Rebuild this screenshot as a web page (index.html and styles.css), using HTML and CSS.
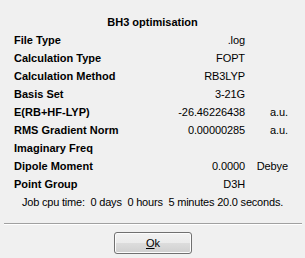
FILE: index.html
```html
<!DOCTYPE html>
<html>
	<head>
		<meta charset="UTF-8">
		<title>BH3 optimisation</title>
		<link rel="stylesheet" href="styles.css">
	</head>
	<body>
		<div id="dialog">
			<div class="title">BH3 optimisation</div>
			<div id="props">
				<div class="lbl">File Type</div><div class="val">.log</div><div class="unit"></div>
				<div class="lbl">Calculation Type</div><div class="val">FOPT</div><div class="unit"></div>
				<div class="lbl">Calculation Method</div><div class="val">RB3LYP</div><div class="unit"></div>
				<div class="lbl">Basis Set</div><div class="val">3-21G</div><div class="unit"></div>
				<div class="lbl">E(RB+HF-LYP)</div><div class="val">-26.46226438</div><div class="unit">a.u.</div>
				<div class="lbl">RMS Gradient Norm</div><div class="val">0.00000285</div><div class="unit">a.u.</div>
				<div class="lbl">Imaginary Freq</div><div class="val"></div><div class="unit"></div>
				<div class="lbl">Dipole Moment</div><div class="val">0.0000</div><div class="unit">Debye</div>
				<div class="lbl">Point Group</div><div class="val">D3H</div><div class="unit"></div>
			</div>
			<div class="cpu">Job cpu time:  0 days  0 hours  5 minutes 20.0 seconds.</div>
			<div class="sep"></div>
			<div class="buttons">
				<button class="btn"><u>O</u>k</button>
			</div>
		</div>
	</body>
</html>
```

FILE: styles.css
```css
* {
	margin: 0;
	padding: 0;
	box-sizing: border-box;
}

body {
	background: #f0f0f0;
	font-family: "Liberation Sans", Arial, sans-serif;
	font-size: 11px;
	color: #000;
}

#dialog {
	width: 305px;
	height: 258px;
	padding-top: 13px;
}

.title {
	font-weight: bold;
	text-align: center;
	line-height: 18px;
}

#props {
	display: grid;
	grid-template-columns: 1fr 100px 43px;
	padding: 0 17px 0 14px;
	line-height: 18px;
}

.lbl {
	font-weight: bold;
	white-space: nowrap;
}

.val,
.unit {
	text-align: right;
	white-space: nowrap;
	letter-spacing: -0.1px;
}

.cpu {
	text-align: center;
	white-space: pre;
	line-height: 18px;
	letter-spacing: -0.2px;
}

.sep {
	margin: 12px 3px 0 4px;
	border-top: 1px solid #a0a0a0;
	border-bottom: 1px solid #fff;
}

.buttons {
	display: flex;
	justify-content: center;
	padding-top: 7px;
}

.btn {
	width: 78px;
	height: 22px;
	margin-left: 1px;
	border: 1px solid #707070;
	border-radius: 3px;
	box-shadow: inset 0 0 0 1px #fcfcfc;
	background: linear-gradient(#f2f2f2 0, #ebebeb 50%, #dddddd 50%, #cfcfcf 100%);
	font-family: "Liberation Sans", Arial, sans-serif;
	font-size: 11px;
	color: #000;
}

.btn u {
	text-decoration: underline;
}
```
